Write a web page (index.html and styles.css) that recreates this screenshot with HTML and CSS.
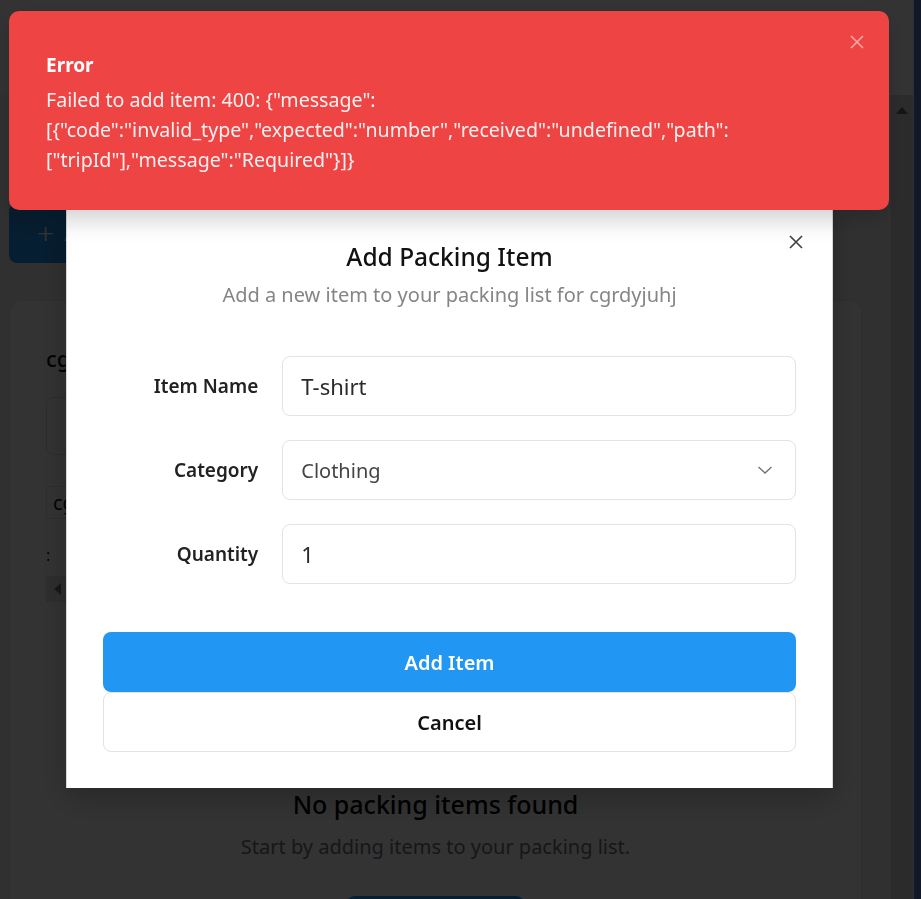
FILE: index.html
```html
<!DOCTYPE html>
<html lang="en">
<head>
<meta charset="utf-8">
<title>Packing List</title>
<link rel="stylesheet" href="styles.css">
</head>
<body>
<div class="app">
  <div class="page">
    <header class="topbar"></header>
    <div class="main">
      <div class="content">
        <button class="primary-btn top-add"><span class="plus">+</span> Add Item</button>
        <section class="card">
          <h2 class="trip-name">cgrdyjuhj</h2>
          <div class="search-box"></div>
          <div class="chips"><span class="chip">cgrdyjuhj</span></div>
          <div class="colon">:</div>
          <div class="hscroll"><span class="hscroll-arrow"></span></div>
          <div class="empty">
            <h3 class="empty-title">No packing items found</h3>
            <p class="empty-text">Start by adding items to your packing list.</p>
            <button class="primary-btn empty-btn">Add First Item</button>
          </div>
        </section>
      </div>
      <div class="vscroll"><span class="vscroll-arrow"></span></div>
    </div>
  </div>
  <div class="frame-edge"></div>
</div>

<div class="overlay"></div>

<div class="modal" role="dialog">
  <button class="modal-close" aria-label="Close">
    <svg width="14" height="14" viewBox="0 0 14 14"><path d="M1 1 L13 13 M13 1 L1 13" stroke="#444" stroke-width="1.7" fill="none"/></svg>
  </button>
  <h2 class="modal-title">Add Packing Item</h2>
  <p class="modal-sub">Add a new item to your packing list for cgrdyjuhj</p>
  <form class="form">
    <label class="form-label">Item Name</label>
    <div class="field text">T-shirt</div>
    <label class="form-label">Category</label>
    <div class="field select">Clothing
      <svg class="chev" width="16" height="10" viewBox="0 0 16 10"><path d="M1.5 2 L8 8 L14.5 2" stroke="#707070" stroke-width="1.3" fill="none"/></svg>
    </div>
    <label class="form-label">Quantity</label>
    <div class="field text">1</div>
  </form>
  <div class="modal-actions">
    <button class="btn-add">Add Item</button>
    <button class="btn-cancel">Cancel</button>
  </div>
</div>

<div class="toast" role="alert">
  <div class="toast-title">Error</div>
  <div class="toast-msg">Failed to add item: 400: {"message":<br>[{"code":"invalid_type","expected":"number","received":"undefined","path":<br>["tripId"],"message":"Required"}]}</div>
  <button class="toast-close" aria-label="Close">
    <svg width="14" height="14" viewBox="0 0 14 14"><path d="M1 1 L13 13 M13 1 L1 13" stroke="rgba(255,255,255,0.55)" stroke-width="1.6" fill="none"/></svg>
  </button>
</div>
</body>
</html>
```

FILE: styles.css
```css
* { box-sizing: border-box; }
html, body { margin: 0; padding: 0; height: 100%; }
body {
  font-family: "Noto Sans", "Open Sans", sans-serif;
  background: #f2f2f2;
  overflow: hidden;
}
button { font-family: inherit; }

.app { display: flex; height: 899px; }
.page { flex: 1; display: flex; flex-direction: column; background: #f1f1f1; min-width: 0; }
.frame-edge { width: 8px; background: #111827; border-left: 1px solid #2a2f3a; position: relative; z-index: 30; }

.topbar { height: 95px; background: #ffffff; flex: none; }
.main { flex: 1; display: flex; min-height: 0; overflow: hidden; }
.content { flex: 1; padding: 108px 29px 0 9px; display: flex; flex-direction: column; align-items: flex-start; min-height: 0; }
.vscroll { width: 22px; background: #d8d8d8; display: flex; justify-content: center; padding-top: 12px; flex: none; }
.vscroll-arrow { width: 0; height: 0; border-left: 6px solid transparent; border-right: 6px solid transparent; border-bottom: 7px solid #6a6a6a; }

.primary-btn {
  background: #2196f3; color: #fff; border: none; border-radius: 8px;
  font-size: 20px; font-weight: 600;
}
.top-add { flex: none; height: 60px; padding: 0 28px; display: flex; align-items: center; gap: 10px; }
.plus { font-size: 30px; font-weight: 300; line-height: 1; }

.card {
  flex: none; margin-top: 37px; width: 853px; height: 700px; overflow: hidden;
  background: #ffffff; border: 1px solid #e6e6e6; border-radius: 12px 12px 0 0;
  padding: 42px 36px 0 36px;
}
.trip-name { margin: 0; font-size: 22px; font-weight: 500; color: #111; line-height: 30px; }
.search-box { margin-top: 24px; height: 58px; width: 400px; border: 1px solid #dcdcdc; border-radius: 8px; }
.chips { margin-top: 31px; }
.chip { display: inline-block; padding: 2px 6px; border: 1px solid #e0e0e0; border-radius: 4px; font-size: 20px; color: #111; }
.colon { margin-top: 25px; font-size: 16px; color: #111; height: 22px; }
.hscroll { margin-top: 10px; width: 300px; height: 26px; background: #e6e6e6; display: flex; align-items: center; padding-left: 8px; }
.hscroll-arrow { width: 0; height: 0; border-top: 6px solid transparent; border-bottom: 6px solid transparent; border-right: 7px solid #777; }
.empty { margin-top: 185px; text-align: center; display: flex; flex-direction: column; align-items: center; }
.empty-title { margin: 0; font-size: 25px; font-weight: 500; color: #000; line-height: 34px; }
.empty-text { margin: 12px 0 0; font-size: 20px; line-height: 27px; color: #6b7280; }
.empty-btn { margin-top: 36px; height: 60px; width: 177px; flex: none; padding-top: 14px; }

.overlay { position: fixed; left: 0; top: 0; width: 913px; height: 899px; background: rgba(0,0,0,0.8); z-index: 10; }

.modal {
  position: fixed; left: 66px; top: 203px; width: 767px; height: 585px;
  background: #fff; z-index: 20; padding: 36px;
  border-left: 1px solid #d8d8d8; border-right: 1px solid #d8d8d8;
  box-shadow: 0 10px 30px rgba(0,0,0,0.25);
}
.modal-close { position: absolute; right: 29px; top: 32px; background: none; border: none; padding: 0; width: 14px; height: 14px; }
.modal-title { margin: 0; text-align: center; font-size: 24.5px; font-weight: 500; line-height: 36px; color: #111; }
.modal-sub { margin: 6px 0 0; text-align: center; font-size: 20px; line-height: 28px; color: #858585; }
.form { margin-top: 47px; display: grid; grid-template-columns: repeat(4, 1fr); column-gap: 24px; row-gap: 24px; align-items: center; }
.form-label { text-align: right; font-size: 19px; font-weight: 600; color: #222; }
.field {
  grid-column: span 3; height: 60px; border: 1px solid #e3e3e3; border-radius: 8px;
  padding-left: 18px; display: flex; align-items: center; font-size: 20px; color: #2a2a2a;
}
.field.text { font-size: 22px; }
.field.select { color: #444; justify-content: space-between; padding-right: 22px; }
.modal-actions { margin-top: 48px; display: flex; flex-direction: column; }
.btn-add { height: 60px; background: #2196f3; color: #fff; border: none; border-radius: 8px; font-size: 20px; font-weight: 600; }
.btn-cancel { height: 60px; background: #fff; color: #111; border: 1px solid #e3e3e3; border-radius: 8px; font-size: 20px; font-weight: 600; }

.toast {
  position: fixed; left: 9px; top: 11px; width: 880px; height: 199px;
  background: #ef4444; border-radius: 10px; z-index: 40;
  padding: 40px 37px 0 37px; color: #fff;
  box-shadow: 0 10px 25px rgba(0,0,0,0.18);
}
.toast-title { font-size: 19px; font-weight: 700; line-height: 28px; }
.toast-msg { margin-top: 6px; font-size: 19.6px; line-height: 30px; color: rgba(255,255,255,0.92); }
.toast-close { position: absolute; right: 25px; top: 24px; background: none; border: none; padding: 0; width: 14px; height: 14px; }
```
